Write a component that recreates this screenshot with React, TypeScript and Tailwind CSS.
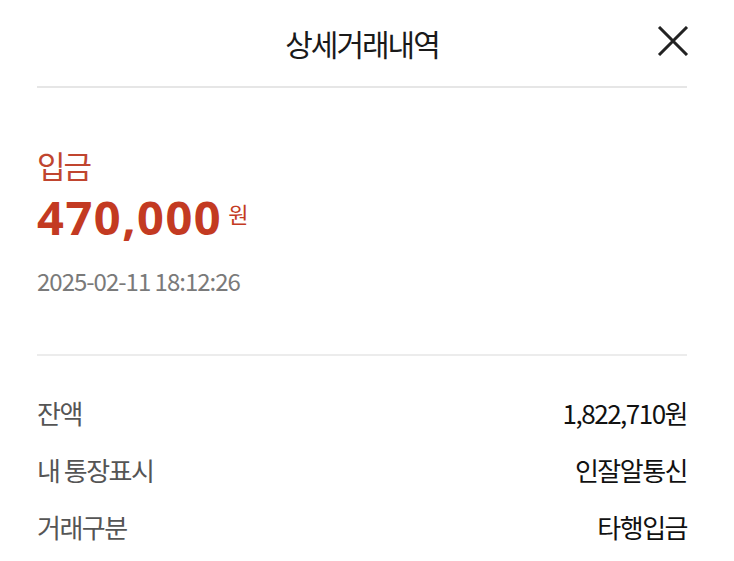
import React from "react";

const rows = [
  { label: "잔액", value: "1,822,710원" },
  { label: "내 통장표시", value: "인잘알통신" },
  { label: "거래구분", value: "타행입금" },
];

export default function App() {
  return (
    <div className="w-[734px] h-[561px] bg-white overflow-hidden pl-[37px] pr-[47px] font-['Noto_Sans_CJK_KR','Noto_Sans',sans-serif]">
      {/* header */}
      <div className="relative h-[86px] flex items-center justify-center">
        <h1 className="text-[30px] text-[#1a1a1a] tracking-[-2px] leading-none">상세거래내역</h1>
        <button className="absolute -right-[2px] top-[26px]">
          <svg width="32" height="30" viewBox="0 0 32 30" fill="none">
            <path d="M2 1L30 29M30 1L2 29" stroke="#222" strokeWidth="3" />
          </svg>
        </button>
      </div>
      <div className="h-[2px] bg-[#e6e6e6]" />

      {/* amount */}
      <div className="pt-[56px] pb-[58px] border-b-2 border-[#ececec]">
        <div className="text-[31px] leading-[42px] text-[#c0452f] tracking-[-2px]">입금</div>
        <div className="flex items-baseline gap-[6px] mt-[4px]">
          <span className="text-[47px] leading-[54px] font-bold text-[#c33a22] tracking-[1.5px] font-['Noto_Sans',sans-serif]">470,000</span>
          <span className="text-[22px] text-[#c33a22] relative -top-[12px]">원</span>
        </div>
        <div className="mt-[22px] text-[24px] leading-[30px] text-[#7a7a7a] tracking-[-1px]">2025-02-11 18:12:26</div>
      </div>

      {/* details */}
      <div className="pt-[38px] flex flex-col gap-[21px]">
        {rows.map((r) => (
          <div key={r.label} className="flex justify-between items-center h-[36px]">
            <span className="text-[26px] text-[#555] tracking-[-1.5px]">{r.label}</span>
            <span className="text-[26px] text-[#111] tracking-[-1.5px]">{r.value}</span>
          </div>
        ))}
      </div>
    </div>
  );
}
